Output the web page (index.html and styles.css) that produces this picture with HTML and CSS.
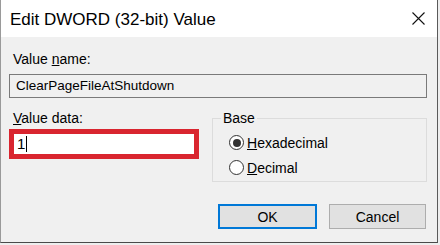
FILE: index.html
```html
<!DOCTYPE html>
<html>
<head>
<meta charset="utf-8">
<link rel="stylesheet" href="styles.css">
</head>
<body>
<div class="window">
  <div class="titlebar">
    <span class="title">Edit DWORD (32-bit) Value</span>
    <svg class="close" width="13" height="13" viewBox="0 0 13 13"><path d="M0.5 0.5 L12.5 12.5 M12.5 0.5 L0.5 12.5" stroke="#111" stroke-width="1.1" fill="none"/></svg>
  </div>
  <div class="content">
    <div class="label">Value <u>n</u>ame:</div>
    <div class="field name-field">ClearPageFileAtShutdown</div>
    <div class="row">
      <div class="data-col">
        <div class="label"><u>V</u>alue data:</div>
        <div class="data-field"><span>1</span><span class="caret"></span></div>
      </div>
      <fieldset class="base">
        <legend>Base</legend>
        <div class="radio"><span class="circle checked"></span><span><u>H</u>exadecimal</span></div>
        <div class="radio"><span class="circle"></span><span><u>D</u>ecimal</span></div>
      </fieldset>
    </div>
    <div class="buttons">
      <div class="btn ok">OK</div>
      <div class="btn cancel">Cancel</div>
    </div>
  </div>
</div>
</body>
</html>
```
FILE: styles.css
```css
html, body { margin: 0; padding: 0; background: #eeeeee; }
body { font-family: "Liberation Sans", Arial, sans-serif; color: #000; }
.window {
  width: 436px; height: 242px;
  border-left: 1px solid #9a9a9a;
  border-right: 1px solid #5a5a5a;
  border-bottom: 1px solid #4a4a4a;
  background: #f0f0f0;
  overflow: hidden;
}
.titlebar {
  height: 37px; background: #fff;
  display: flex; align-items: center; justify-content: space-between;
  padding: 0 12px 0 9px;
}
.title { font-size: 17px; position: relative; top: 1px; }
.close { display: block; }
.content { padding: 0 10px 0 8px; }
.label { font-size: 14px; line-height: 17px; padding-left: 4px; }
.content > .label { margin-top: 14px; }
.field {
  height: 22px; border: 1px solid #7a7a7a; background: #f0f0f0;
  font-size: 13.5px; line-height: 22px; padding-left: 6px; margin-top: 6px;
}
.row { display: grid; grid-template-columns: 190px 1fr; column-gap: 13px; margin-top: 12px; }
.data-field {
  margin-top: 2px; height: 20px; border: 5px solid #d9252f; background: #fff;
  font-size: 15px; line-height: 20px; padding-left: 3px;
  display: flex; align-items: center;
}
.caret { display: inline-block; width: 1px; height: 16px; background: #000; margin-left: 1px; }
.base {
  margin: 0; padding: 0 0 0 16px; border: 1px solid #dcdcdc;
  height: 70px; min-width: 0;
}
.base legend { font-size: 14px; line-height: 17px; padding: 0 2px; margin-left: -8px; }
.radio { display: flex; align-items: center; font-size: 14px; height: 25px; }
.radio:first-of-type { margin-top: 3px; }
.circle {
  width: 13px; height: 13px; border: 1px solid #333; border-radius: 50%; background: #fff;
  margin-right: 3px; display: flex; align-items: center; justify-content: center;
}
.circle.checked::after { content: ""; width: 8px; height: 8px; border-radius: 50%; background: #333; }
.buttons { display: flex; justify-content: flex-end; gap: 12px; margin-top: 22px; padding-right: 1px; }
.btn {
  height: 25px; box-sizing: border-box; background: #e1e1e1;
  display: flex; align-items: center; justify-content: center; font-size: 14px;
}
.ok { width: 99px; border: 2px solid #0078d7; }
.cancel { width: 97px; border: 1px solid #adadad; }
```
